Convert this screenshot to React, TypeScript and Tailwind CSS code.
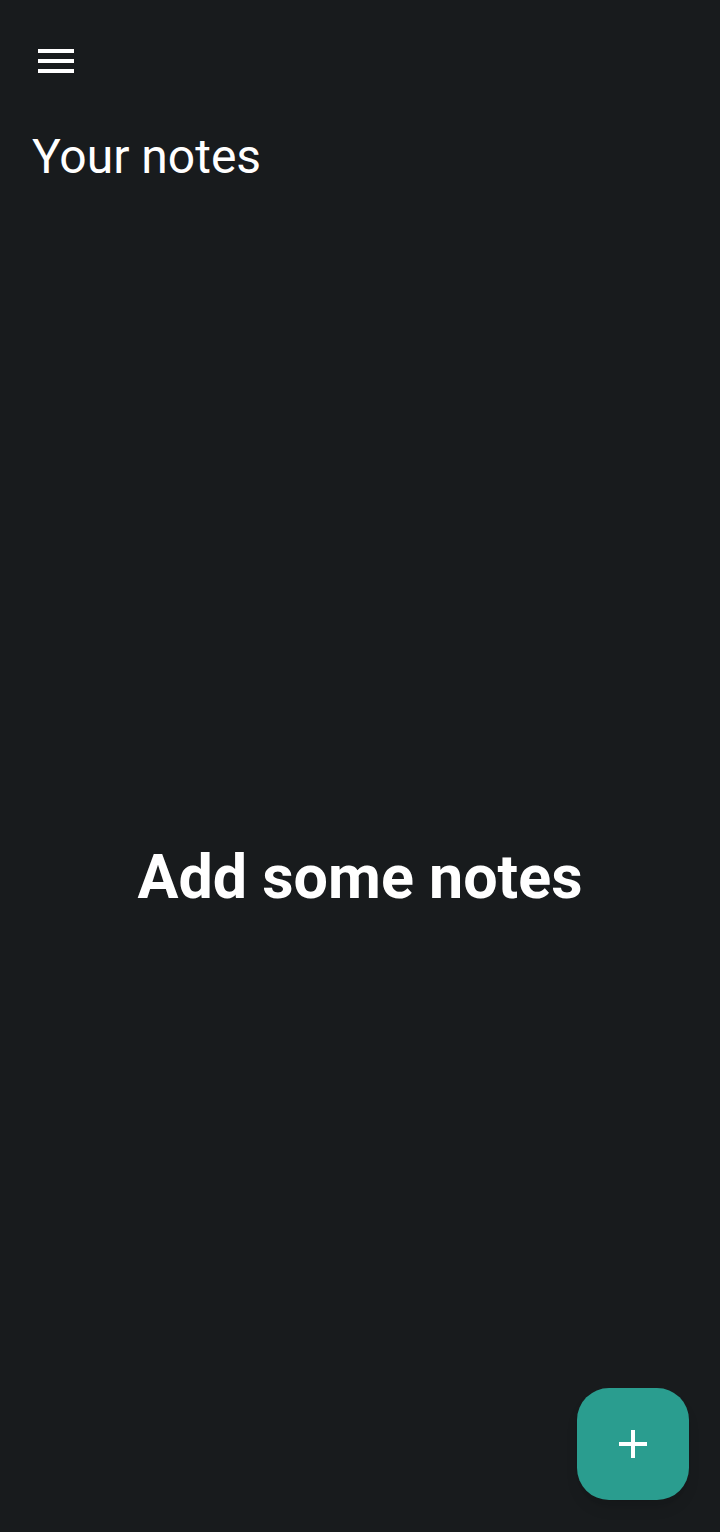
import React from "react";

const App: React.FC = () => {
  return (
    <div
      className="relative flex h-[1532px] w-[720px] flex-col bg-[#181b1d] text-white"
      style={{ fontFamily: "Roboto, 'Noto Sans', sans-serif" }}
    >
      <div className="flex h-[122px] items-center px-[38px]">
        <button className="flex h-[24px] w-[36px] flex-col justify-between">
          <span className="block h-[4px] w-full bg-white" />
          <span className="block h-[4px] w-full bg-white" />
          <span className="block h-[4px] w-full bg-white" />
        </button>
      </div>
      <h1 className="mt-[7px] px-[32px] text-[48px] font-normal leading-[56px]">Your notes</h1>
      <div className="flex flex-1 items-center justify-center pt-[37px]">
        <p className="text-[61px] font-bold leading-none">Add some notes</p>
      </div>
      <button className="absolute bottom-[32px] right-[31px] flex h-[112px] w-[112px] items-center justify-center rounded-[32px] bg-[#2a9d8f] shadow-lg">
        <svg width="30" height="30" viewBox="0 0 30 30">
          <rect x="13" y="1" width="4" height="28" fill="white" />
          <rect x="1" y="13" width="28" height="4" fill="white" />
        </svg>
      </button>
    </div>
  );
};

export default App;
